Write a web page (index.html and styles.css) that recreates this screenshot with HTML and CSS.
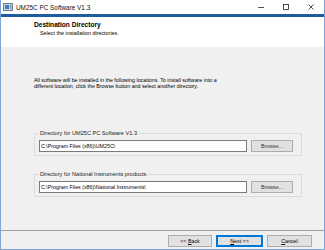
FILE: index.html
```html
<!DOCTYPE html>
<html lang="en">
<head>
    <meta charset="UTF-8">
    <meta name="viewport" content="width=device-width, initial-scale=1.0">
    <title>UM25C PC Software V1.3</title>
    <link rel="stylesheet" href="styles.css">
</head>
<body>
    <div class="window">
        <div class="titlebar">
            <svg class="app-icon" width="10" height="10" viewBox="0 0 10 10">
                <rect x="0.5" y="1.5" width="9" height="7" fill="#c9d3dd" stroke="#6f7f90"/>
                <rect x="2" y="3" width="4" height="4" fill="#3f7fc4"/>
                <rect x="7" y="3" width="1.5" height="4" fill="#8aa0b6"/>
            </svg>
            <span class="title">UM25C PC Software V1.3</span>
            <div class="controls">
                <svg class="ctl" width="6" height="6" viewBox="0 0 6 6"><line x1="0" y1="3.5" x2="6" y2="3.5" stroke="#222" stroke-width="0.8"/></svg>
                <svg class="ctl" width="6" height="6" viewBox="0 0 6 6"><rect x="0.5" y="0.5" width="5" height="5" fill="none" stroke="#222" stroke-width="0.8"/></svg>
                <svg class="ctl" width="6" height="6" viewBox="0 0 6 6"><path d="M0.5 0.5 L5.5 5.5 M5.5 0.5 L0.5 5.5" stroke="#222" stroke-width="0.8"/></svg>
            </div>
        </div>
        <div class="accent"></div>

        <div class="header">
            <h1>Destination Directory</h1>
            <p>Select the installation directories.</p>
        </div>

        <div class="content">
            <p class="intro">All software will be installed in the following locations. To install software into a<br>different location, click the Browse button and select another directory.</p>

            <fieldset class="group">
                <legend>Directory for UM25C PC Software V1.3</legend>
                <div class="row">
                    <div class="path">C:\Program Files (x86)\UM25C\</div>
                    <button class="btn browse">Browse...</button>
                </div>
            </fieldset>

            <fieldset class="group second">
                <legend>Directory for National Instruments products</legend>
                <div class="row">
                    <div class="path">C:\Program Files (x86)\National Instruments\</div>
                    <button class="btn browse">Browse...</button>
                </div>
            </fieldset>
        </div>

        <div class="footer">
            <button class="btn back">&lt;&lt; <u>B</u>ack</button>
            <button class="btn next"><u>N</u>ext &gt;&gt;</button>
            <button class="btn cancel"><u>C</u>ancel</button>
        </div>
    </div>
</body>
</html>
```

FILE: styles.css
```css
body {
    margin: 0;
    padding: 0;
    font-family: "Liberation Sans", Arial, sans-serif;
    font-size: 5.3px;
    color: #000;
    background-color: #fff;
}

.window {
    width: 325px;
    height: 250px;
    box-sizing: border-box;
    border: 1px solid #7aa5d6;
    border-top: none;
    display: flex;
    flex-direction: column;
    background-color: #f0f0f0;
}

/* Title bar */
.titlebar {
    height: 14px;
    background-color: #fff;
    display: flex;
    align-items: center;
}

.app-icon {
    margin-left: 2px;
    margin-right: 3px;
}

.title {
    font-size: 6.4px;
    color: #111;
}

.controls {
    margin-left: auto;
    display: flex;
    align-items: center;
    gap: 19px;
    margin-right: 10px;
}

.accent {
    height: 3px;
    background-color: #1d5d9f;
}

/* Header panel */
.header {
    height: 30px;
    box-sizing: border-box;
    background-color: #fff;
    padding: 4px 0 0 33px;
}

.header h1 {
    margin: 0;
    font-size: 6.6px;
    font-weight: bold;
    line-height: 8px;
}

.header p {
    margin: 1px 0 0 6px;
    font-size: 5.4px;
    line-height: 7px;
}

/* Body */
.content {
    flex: 1;
    padding: 30px 0 0 33px;
}

.intro {
    margin: 0;
    line-height: 6px;
}

.group {
    width: 268px;
    box-sizing: border-box;
    margin: 41px 0 0 0;
    padding: 4px 7px 3px 4px;
    border: 1px solid #dcdcdc;
    min-width: 0;
}

.group.second {
    margin-top: 15px;
}

.group legend {
    padding: 0 1px;
    font-size: 5.6px;
    line-height: 6px;
    color: #222;
}

.row {
    display: flex;
    align-items: center;
    gap: 4px;
}

.path {
    width: 208px;
    height: 12px;
    box-sizing: border-box;
    border: 1px solid #7a7a7a;
    background-color: #fff;
    padding-left: 1px;
    line-height: 10px;
    white-space: nowrap;
    overflow: hidden;
}

.btn {
    height: 12px;
    box-sizing: border-box;
    border: 1px solid #adadad;
    background-color: #e1e1e1;
    font-family: "Liberation Sans", Arial, sans-serif;
    font-size: 5.3px;
    color: #000;
    padding: 0;
    margin: 0;
    line-height: 10px;
}

.btn u {
    text-decoration-thickness: 0.5px;
}

.browse {
    width: 42px;
    color: #333;
}

/* Footer */
.footer {
    height: 19px;
    box-sizing: border-box;
    border-top: 1px solid #a0a0a0;
    display: flex;
    justify-content: flex-end;
    align-items: flex-start;
    gap: 4px;
    padding: 4px 12px 0 0;
}

.back {
    width: 44px;
}

.next {
    width: 47px;
    border-color: #0078d7;
    box-shadow: inset 0 0 0 1px #0078d7;
}

.cancel {
    width: 45px;
}
```
